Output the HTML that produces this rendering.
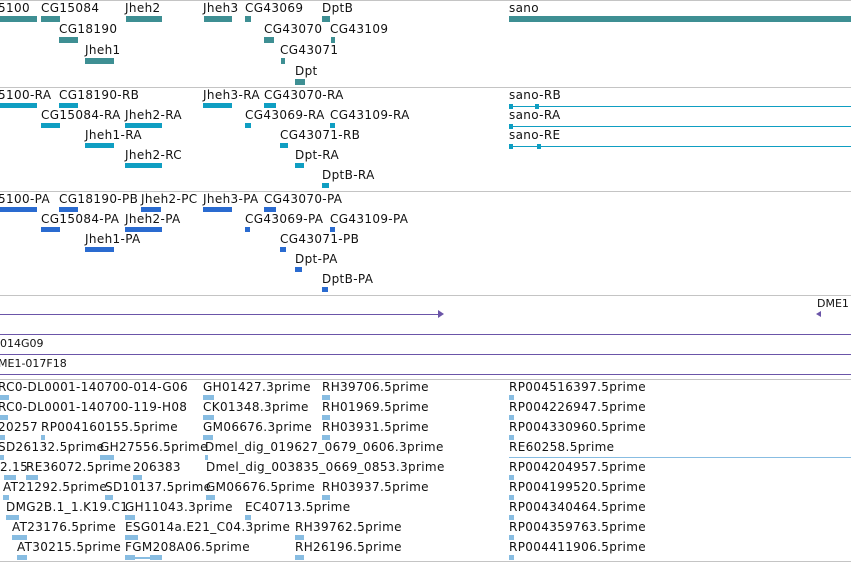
<!DOCTYPE html>
<html><head><meta charset="utf-8"><style>
body{margin:0;width:851px;height:563px;overflow:hidden;background:#fff;position:relative;font-family:"DejaVu Sans","Liberation Sans",sans-serif;font-size:12px;color:#111}
.t{position:absolute;white-space:nowrap;line-height:13px;letter-spacing:0.35px}
.s{font-size:11px;letter-spacing:0}
.h{position:absolute;left:0;width:851px;height:1px;background:#c4c4c4}
.p{position:absolute;left:0;width:851px;height:1px;background:#6b55a8}
.g{position:absolute;height:6px;background:#3e8f93}
.r{position:absolute;height:5px;background:#0f9ec2}
.q{position:absolute;height:5px;background:#2a6bd0}
.e{position:absolute;height:5px;background:#88bde2}
.l{position:absolute;height:1px;background:#0f9ec2}
</style></head><body>
<div class="h" style="top:0"></div>
<div class="h" style="top:87px"></div>
<div class="h" style="top:191px"></div>
<div class="h" style="top:295px"></div>
<div class="h" style="top:379px"></div>
<div class="h" style="top:561px"></div>

<div class="t" style="left:-2px;top:2px">5100</div>
<div class="t" style="left:41px;top:2px">CG15084</div>
<div class="t" style="left:125px;top:2px">Jheh2</div>
<div class="t" style="left:203px;top:2px">Jheh3</div>
<div class="t" style="left:245px;top:2px">CG43069</div>
<div class="t" style="left:322px;top:2px">DptB</div>
<div class="t" style="left:509px;top:2px">sano</div>
<div class="g" style="left:0;top:16px;width:37px"></div>
<div class="g" style="left:41px;top:16px;width:19px"></div>
<div class="g" style="left:126px;top:16px;width:36px"></div>
<div class="g" style="left:204px;top:16px;width:28px"></div>
<div class="g" style="left:245px;top:16px;width:6px"></div>
<div class="g" style="left:322px;top:16px;width:8px"></div>
<div class="g" style="left:509px;top:16px;width:342px"></div>
<div class="t" style="left:59px;top:23px">CG18190</div>
<div class="t" style="left:264px;top:23px">CG43070</div>
<div class="t" style="left:330px;top:23px">CG43109</div>
<div class="g" style="left:59px;top:37px;width:19px"></div>
<div class="g" style="left:264px;top:37px;width:10px"></div>
<div class="g" style="left:331px;top:37px;width:4px"></div>
<div class="t" style="left:85px;top:44px">Jheh1</div>
<div class="t" style="left:280px;top:44px">CG43071</div>
<div class="g" style="left:85px;top:58px;width:29px"></div>
<div class="g" style="left:281px;top:58px;width:4px"></div>
<div class="t" style="left:295px;top:65px">Dpt</div>
<div class="g" style="left:295px;top:79px;width:10px"></div>

<div class="t" style="left:-2px;top:89px">5100-RA</div>
<div class="t" style="left:59px;top:89px">CG18190-RB</div>
<div class="t" style="left:203px;top:89px">Jheh3-RA</div>
<div class="t" style="left:264px;top:89px">CG43070-RA</div>
<div class="t" style="left:509px;top:89px">sano-RB</div>
<div class="r" style="left:0;top:103px;width:37px"></div>
<div class="r" style="left:59px;top:103px;width:19px"></div>
<div class="r" style="left:203px;top:103px;width:29px"></div>
<div class="r" style="left:264px;top:103px;width:12px"></div>
<div class="l" style="left:509px;top:106px;width:342px"></div>
<div class="r" style="left:509px;top:104px;width:4px"></div>
<div class="r" style="left:535px;top:104px;width:4px"></div>
<div class="t" style="left:41px;top:109px">CG15084-RA</div>
<div class="t" style="left:125px;top:109px">Jheh2-RA</div>
<div class="t" style="left:245px;top:109px">CG43069-RA</div>
<div class="t" style="left:330px;top:109px">CG43109-RA</div>
<div class="t" style="left:509px;top:109px">sano-RA</div>
<div class="r" style="left:41px;top:123px;width:19px"></div>
<div class="r" style="left:125px;top:123px;width:37px"></div>
<div class="r" style="left:245px;top:123px;width:6px"></div>
<div class="r" style="left:330px;top:123px;width:5px"></div>
<div class="l" style="left:509px;top:126px;width:342px"></div>
<div class="r" style="left:509px;top:124px;width:4px"></div>
<div class="t" style="left:85px;top:129px">Jheh1-RA</div>
<div class="t" style="left:280px;top:129px">CG43071-RB</div>
<div class="t" style="left:509px;top:129px">sano-RE</div>
<div class="r" style="left:85px;top:143px;width:29px"></div>
<div class="r" style="left:280px;top:143px;width:8px"></div>
<div class="l" style="left:509px;top:146px;width:342px"></div>
<div class="r" style="left:509px;top:144px;width:4px"></div>
<div class="r" style="left:537px;top:144px;width:4px"></div>
<div class="t" style="left:125px;top:149px">Jheh2-RC</div>
<div class="t" style="left:295px;top:149px">Dpt-RA</div>
<div class="r" style="left:125px;top:163px;width:37px"></div>
<div class="r" style="left:295px;top:163px;width:9px"></div>
<div class="t" style="left:322px;top:169px">DptB-RA</div>
<div class="r" style="left:322px;top:183px;width:7px"></div>

<div class="t" style="left:-2px;top:193px">5100-PA</div>
<div class="t" style="left:59px;top:193px">CG18190-PB</div>
<div class="t" style="left:141px;top:193px">Jheh2-PC</div>
<div class="t" style="left:203px;top:193px">Jheh3-PA</div>
<div class="t" style="left:264px;top:193px">CG43070-PA</div>
<div class="q" style="left:0;top:207px;width:37px"></div>
<div class="q" style="left:59px;top:207px;width:19px"></div>
<div class="q" style="left:141px;top:207px;width:20px"></div>
<div class="q" style="left:203px;top:207px;width:29px"></div>
<div class="q" style="left:264px;top:207px;width:12px"></div>
<div class="t" style="left:41px;top:213px">CG15084-PA</div>
<div class="t" style="left:125px;top:213px">Jheh2-PA</div>
<div class="t" style="left:245px;top:213px">CG43069-PA</div>
<div class="t" style="left:330px;top:213px">CG43109-PA</div>
<div class="q" style="left:41px;top:227px;width:19px"></div>
<div class="q" style="left:125px;top:227px;width:37px"></div>
<div class="q" style="left:245px;top:227px;width:5px"></div>
<div class="q" style="left:330px;top:227px;width:5px"></div>
<div class="t" style="left:85px;top:233px">Jheh1-PA</div>
<div class="t" style="left:280px;top:233px">CG43071-PB</div>
<div class="q" style="left:85px;top:247px;width:29px"></div>
<div class="q" style="left:280px;top:247px;width:6px"></div>
<div class="t" style="left:295px;top:253px">Dpt-PA</div>
<div class="q" style="left:295px;top:267px;width:7px"></div>
<div class="t" style="left:322px;top:273px">DptB-PA</div>
<div class="q" style="left:322px;top:287px;width:6px"></div>

<div class="p" style="top:314px;width:440px"></div>
<div style="position:absolute;left:438px;top:310px;width:0;height:0;border-left:6px solid #6b55a8;border-top:4px solid transparent;border-bottom:4px solid transparent"></div>
<div class="t s" style="left:817px;top:297px">DME1</div>
<div style="position:absolute;left:816px;top:311px;width:0;height:0;border-right:5px solid #6b55a8;border-top:3px solid transparent;border-bottom:3px solid transparent"></div>
<div class="p" style="top:334px"></div>
<div class="t s" style="left:0;top:337px">014G09</div>
<div class="p" style="top:354px"></div>
<div class="t s" style="left:-2px;top:357px">ME1-017F18</div>
<div class="p" style="top:374px"></div>

<div class="t" style="left:-2px;top:381px">RC0-DL0001-140700-014-G06</div>
<div class="t" style="left:203px;top:381px">GH01427.3prime</div>
<div class="t" style="left:322px;top:381px">RH39706.5prime</div>
<div class="t" style="left:509px;top:381px">RP004516397.5prime</div>
<div class="e" style="left:0;top:395px;width:9px"></div><div class="e" style="left:203px;top:395px;width:11px"></div><div class="e" style="left:322px;top:395px;width:8px"></div><div class="e" style="left:509px;top:395px;width:5px"></div>
<div class="t" style="left:-2px;top:401px">RC0-DL0001-140700-119-H08</div>
<div class="t" style="left:203px;top:401px">CK01348.3prime</div>
<div class="t" style="left:322px;top:401px">RH01969.5prime</div>
<div class="t" style="left:509px;top:401px">RP004226947.5prime</div>
<div class="e" style="left:0;top:415px;width:8px"></div><div class="e" style="left:203px;top:415px;width:11px"></div><div class="e" style="left:322px;top:415px;width:8px"></div><div class="e" style="left:509px;top:415px;width:5px"></div>
<div class="t" style="left:-2px;top:421px">20257</div>
<div class="t" style="left:41px;top:421px">RP004160155.5prime</div>
<div class="t" style="left:203px;top:421px">GM06676.3prime</div>
<div class="t" style="left:322px;top:421px">RH03931.5prime</div>
<div class="t" style="left:509px;top:421px">RP004330960.5prime</div>
<div class="e" style="left:0;top:435px;width:5px"></div><div class="e" style="left:41px;top:435px;width:4px"></div><div class="e" style="left:203px;top:435px;width:10px"></div><div class="e" style="left:322px;top:435px;width:8px"></div><div class="e" style="left:509px;top:435px;width:5px"></div>
<div class="t" style="left:-2px;top:441px">SD26132.5prime</div>
<div class="t" style="left:100px;top:441px">GH27556.5prime</div>
<div class="t" style="left:205px;top:441px">Dmel_dig_019627_0679_0606.3prime</div>
<div class="t" style="left:509px;top:441px">RE60258.5prime</div>
<div class="e" style="left:0;top:455px;width:4px"></div><div class="e" style="left:100px;top:455px;width:14px"></div><div class="e" style="left:205px;top:455px;width:3px"></div>
<div style="position:absolute;left:509px;top:457px;width:342px;height:1px;background:#88bde2"></div>
<div class="t" style="left:0;top:461px">2.15</div>
<div class="t" style="left:26px;top:461px">RE36072.5prime</div>
<div class="t" style="left:133px;top:461px">206383</div>
<div class="t" style="left:206px;top:461px">Dmel_dig_003835_0669_0853.3prime</div>
<div class="t" style="left:509px;top:461px">RP004204957.5prime</div>
<div class="e" style="left:4px;top:475px;width:12px"></div><div class="e" style="left:26px;top:475px;width:12px"></div><div class="e" style="left:133px;top:475px;width:9px"></div><div class="e" style="left:509px;top:475px;width:5px"></div>
<div class="t" style="left:3px;top:481px">AT21292.5prime</div>
<div class="t" style="left:105px;top:481px">SD10137.5prime</div>
<div class="t" style="left:206px;top:481px">GM06676.5prime</div>
<div class="t" style="left:322px;top:481px">RH03937.5prime</div>
<div class="t" style="left:509px;top:481px">RP004199520.5prime</div>
<div class="e" style="left:3px;top:495px;width:6px"></div><div class="e" style="left:105px;top:495px;width:8px"></div><div class="e" style="left:206px;top:495px;width:9px"></div><div class="e" style="left:322px;top:495px;width:8px"></div><div class="e" style="left:509px;top:495px;width:5px"></div>
<div class="t" style="left:6px;top:501px">DMG2B.1_1.K19.C1</div>
<div class="t" style="left:125px;top:501px">GH11043.3prime</div>
<div class="t" style="left:245px;top:501px">EC40713.5prime</div>
<div class="t" style="left:509px;top:501px">RP004340464.5prime</div>
<div class="e" style="left:6px;top:515px;width:13px"></div><div class="e" style="left:125px;top:515px;width:10px"></div><div class="e" style="left:245px;top:515px;width:6px"></div><div class="e" style="left:509px;top:515px;width:5px"></div>
<div class="t" style="left:12px;top:521px">AT23176.5prime</div>
<div class="t" style="left:125px;top:521px">ESG014a.E21_C04.3prime</div>
<div class="t" style="left:295px;top:521px">RH39762.5prime</div>
<div class="t" style="left:509px;top:521px">RP004359763.5prime</div>
<div class="e" style="left:12px;top:535px;width:15px"></div><div class="e" style="left:125px;top:535px;width:13px"></div><div class="e" style="left:295px;top:535px;width:9px"></div><div class="e" style="left:509px;top:535px;width:5px"></div>
<div class="t" style="left:17px;top:541px">AT30215.5prime</div>
<div class="t" style="left:125px;top:541px">FGM208A06.5prime</div>
<div class="t" style="left:295px;top:541px">RH26196.5prime</div>
<div class="t" style="left:509px;top:541px">RP004411906.5prime</div>
<div class="e" style="left:17px;top:555px;width:10px"></div><div class="e" style="left:125px;top:557px;width:37px;height:2px"></div><div class="e" style="left:125px;top:555px;width:10px"></div><div class="e" style="left:150px;top:555px;width:12px"></div><div class="e" style="left:295px;top:555px;width:9px"></div><div class="e" style="left:509px;top:555px;width:5px"></div>
</body></html>
